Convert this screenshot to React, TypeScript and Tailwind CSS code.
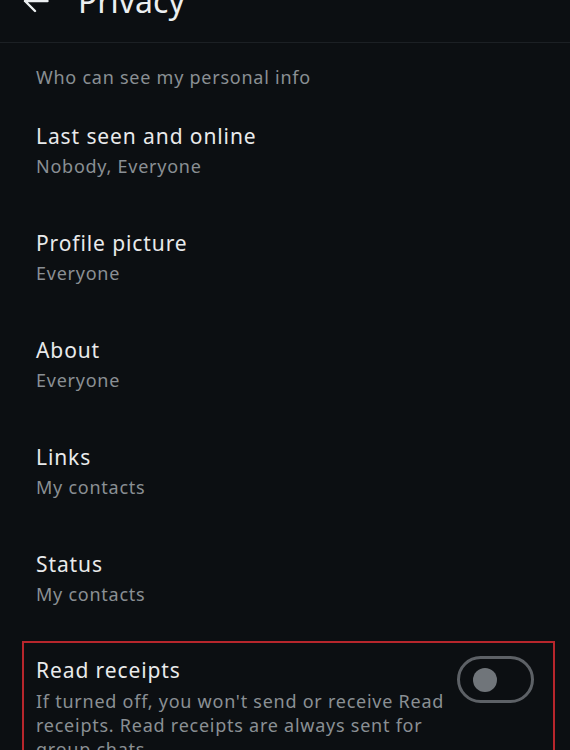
interface PrivacyItem {
  title: string;
  value: string;
}

const items: PrivacyItem[] = [
  { title: "Last seen and online", value: "Nobody, Everyone" },
  { title: "Profile picture", value: "Everyone" },
  { title: "About", value: "Everyone" },
  { title: "Links", value: "My contacts" },
  { title: "Status", value: "My contacts" },
];

const SettingRow = ({ item }: { item: PrivacyItem }) => (
  <div className="px-9 py-6">
    <div className="text-[21px] leading-[30px] tracking-[0.9px] text-[#e9eaeb]">{item.title}</div>
    <div className="pt-[1px] text-[18px] leading-[28px] tracking-[0.75px] text-[#8a8f94]">{item.value}</div>
  </div>
);

const App = () => {
  return (
    <div
      className="h-[750px] w-[570px] overflow-hidden bg-[#0c0f12]"
      style={{ fontFamily: "'Noto Sans', Roboto, sans-serif" }}
    >
      <div className="h-[43px] overflow-hidden border-b border-[#1c2024]">
        <div className="-mt-[23px] flex h-[48px] items-center gap-[29px] pl-[23px]">
          <svg width="26" height="26" viewBox="0 0 26 26" fill="none" className="shrink-0">
            <path
              d="M24.5 13H2M12 3L2 13L12 23"
              stroke="#eceff1"
              strokeWidth="2.4"
              strokeLinecap="round"
              strokeLinejoin="round"
            />
          </svg>
          <span className="text-[32px] text-[#eceff1]">Privacy</span>
        </div>
      </div>

      <div className="px-9 pt-[20px] text-[18px] leading-[28px] tracking-[0.75px] text-[#8a8f94]">
        Who can see my personal info
      </div>
      <div className="mt-[6px]">
        {items.map((item) => (
          <SettingRow key={item.title} item={item} />
        ))}
      </div>

      <div className="ml-[22px] mt-[9px] w-[533px] border-2 border-[#b8262c] px-3 pt-[12px]">
        <div className="flex items-start justify-between">
          <div className="w-[410px]">
            <div className="mb-[4px] text-[21px] leading-[30px] tracking-[0.9px] text-[#e9eaeb]">
              Read receipts
            </div>
            <div className="text-[18px] leading-[24px] tracking-[0.75px] text-[#8a8f94]">
              If turned off, you won't send or receive Read receipts. Read receipts are always sent for
              group chats.
            </div>
          </div>
          <button
            className="mr-[7px] mt-[1px] flex h-[47px] w-[77px] shrink-0 items-center rounded-full border-[3px] border-[#5d6166] pl-[13px]"
            aria-label="Toggle read receipts"
          >
            <span className="h-[24px] w-[24px] rounded-full bg-[#70757a]" />
          </button>
        </div>
      </div>
    </div>
  );
};

export default App;
